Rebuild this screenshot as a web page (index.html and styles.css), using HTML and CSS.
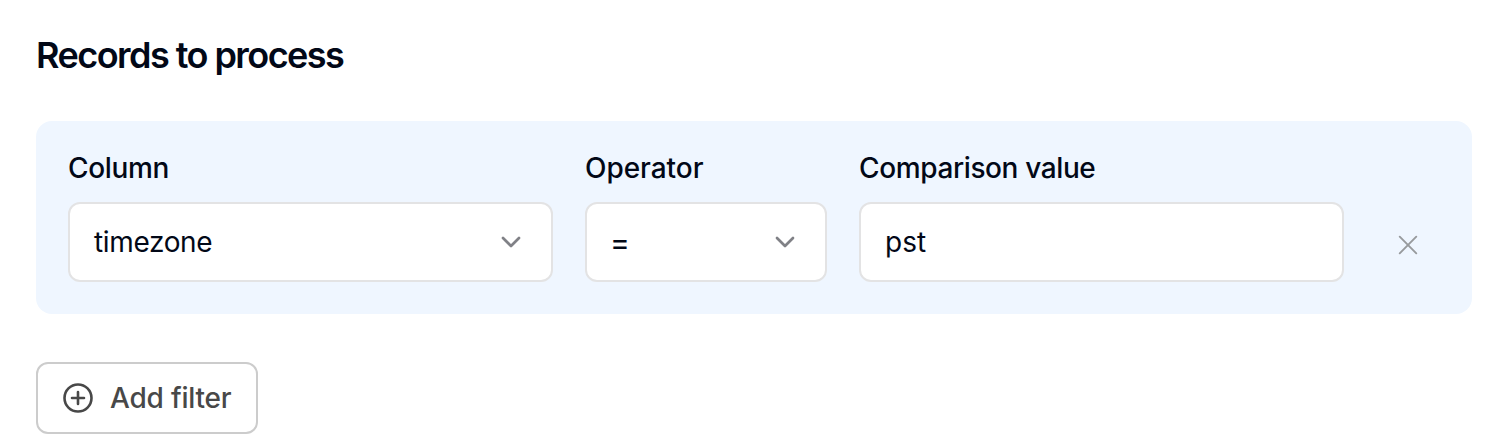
FILE: index.html
```html
<!DOCTYPE html>
<html lang="en">
<head>
<meta charset="utf-8">
<title>Records to process</title>
<link rel="stylesheet" href="styles.css">
</head>
<body>
<main class="page">
  <h2 class="title"><span class="title-text">Records to process</span></h2>
  <section class="filter">
    <div class="field field-column">
      <div class="label"><span class="t-column">Column</span></div>
      <div class="control"><span class="t-timezone">timezone</span>
        <svg class="chevron" viewBox="0 0 24 24" width="24" height="24"><path d="M4 8l8 8 8-8"/></svg>
      </div>
    </div>
    <div class="field field-operator">
      <div class="label"><span class="t-operator">Operator</span></div>
      <div class="control"><span class="t-equals">=</span>
        <svg class="chevron" viewBox="0 0 24 24" width="24" height="24"><path d="M4 8l8 8 8-8"/></svg>
      </div>
    </div>
    <div class="field field-value">
      <div class="label"><span class="t-comparison">Comparison value</span></div>
      <div class="control"><span class="t-pst">pst</span></div>
    </div>
    <svg class="remove" viewBox="0 0 24 24" width="24" height="24"><path d="M3.7 3.7l16.6 16.6M20.3 3.7l-16.6 16.6"/></svg>
  </section>
  <button class="add" type="button">
    <svg class="plus" viewBox="0 0 32 32" width="32" height="32"><circle cx="16" cy="16" r="13.5"/><path d="M16 10v12M10 16h12"/></svg>
    <span class="t-add">Add filter</span>
  </button>
</main>
</body>
</html>
```
FILE: styles.css
```css
* { box-sizing: border-box; }
body { margin: 0; background: #fff; color: #020817; font-family: Inter, sans-serif; font-size: 28px; }
.page { padding: 31px 34px 0 36px; height: 446px; overflow: hidden; }
.title { margin: 0 0 42px; font-size: 36px; line-height: 48px; font-weight: 600; letter-spacing: -1.54px; }
.filter { display: flex; gap: 32px; height: 193px; padding: 29px 32px 28px; border-radius: 16px; background: #eff6ff; }
.field-column, .field-value { width: 485px; }
.field-operator { width: 242px; }
.label { height: 36px; line-height: 36px; margin-bottom: 16px; font-weight: 500; white-space: nowrap; }
.control { display: flex; align-items: center; justify-content: space-between; height: 80px; padding: 0 28px 0 24px; border: 2px solid #e3e3e4; border-radius: 12px; background: #fff; }
.t-column { letter-spacing: -0.35px; }
.t-comparison { letter-spacing: -0.38px; }
.t-operator { letter-spacing: -0.05px; }
.t-timezone { letter-spacing: -0.35px; }
.t-equals { margin-left: -1px; font-size: 30px; }
.t-add { letter-spacing: -0.2px; }
.chevron, .remove, .plus { display: block; flex: none; fill: none; stroke-linecap: round; stroke-linejoin: round; }
.chevron { stroke: #808186; stroke-width: 2.7; }
.remove { margin: 83px 0 0 20px; stroke: #979a9d; stroke-width: 1.9; }
.add { display: flex; align-items: center; gap: 16px; width: 222px; height: 72px; margin-top: 48px; padding: 0 0 0 24px; border: 2px solid #ccc; border-radius: 12px; background: #fff; color: #484848; font: 500 28px/36px Inter, sans-serif; white-space: nowrap; }
.plus { stroke: #484848; stroke-width: 2.6; }
```
